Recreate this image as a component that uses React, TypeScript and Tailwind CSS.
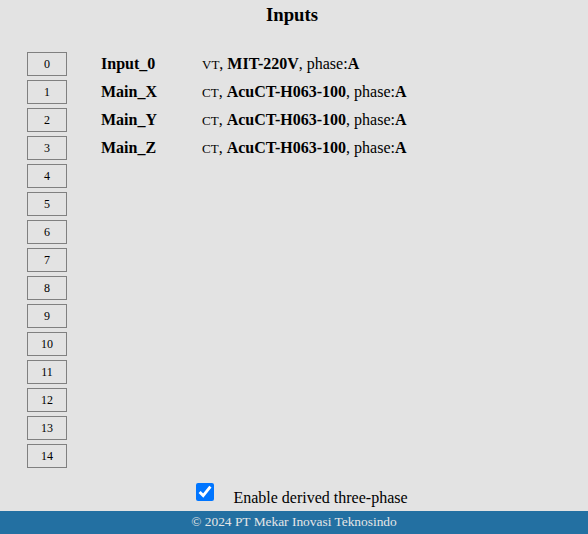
import React from "react";

const rows = [
  { name: "Input_0", kind: "VT", model: "MIT-220V", phase: "A" },
  { name: "Main_X", kind: "CT", model: "AcuCT-H063-100", phase: "A" },
  { name: "Main_Y", kind: "CT", model: "AcuCT-H063-100", phase: "A" },
  { name: "Main_Z", kind: "CT", model: "AcuCT-H063-100", phase: "A" },
];

export default function App() {
  const slots = Array.from({ length: 15 }, (_, i) => i);

  return (
    <div className="w-[588px] h-[534px] bg-[#e3e3e3] text-black flex flex-col font-['Liberation_Serif',serif]">
      <h1 className="text-center text-[18.7px] font-bold leading-[22px] pt-[4px] pr-[4px]">Inputs</h1>

      <div className="flex flex-col mt-[26px] pl-[27px]">
        {slots.map((i) => {
          const row = rows[i];
          return (
            <div key={i} className="flex items-center h-[24px] mb-[4px]">
              <div className="w-[40px] h-[24px] border border-[#808080] flex items-center justify-center text-[12px]">
                {i}
              </div>
              {row && (
                <>
                  <div className="w-[101px] pl-[34px] text-[16px] font-bold whitespace-nowrap box-content">
                    {row.name}
                  </div>
                  <div className="text-[16px] whitespace-nowrap">
                    <span className="text-[13px]">{row.kind}</span>,{" "}
                    <b>{row.model}</b>, phase:<b>{row.phase}</b>
                  </div>
                </>
              )}
            </div>
          );
        })}
      </div>

      <div className="flex items-center justify-center mt-[9px] h-[22px] pl-[16px]">
        <input
          type="checkbox"
          defaultChecked
          className="w-[18px] h-[18px] m-0 accent-[#0075ff]"
        />
        <span className="ml-[19px] text-[16px] mt-[11px]">Enable derived three-phase</span>
      </div>

      <div className="mt-auto h-[23px] bg-[#2370a2] text-[#e6e6e6] text-[13.4px] flex items-center justify-center">
        © 2024 PT Mekar Inovasi Teknosindo
      </div>
    </div>
  );
}
